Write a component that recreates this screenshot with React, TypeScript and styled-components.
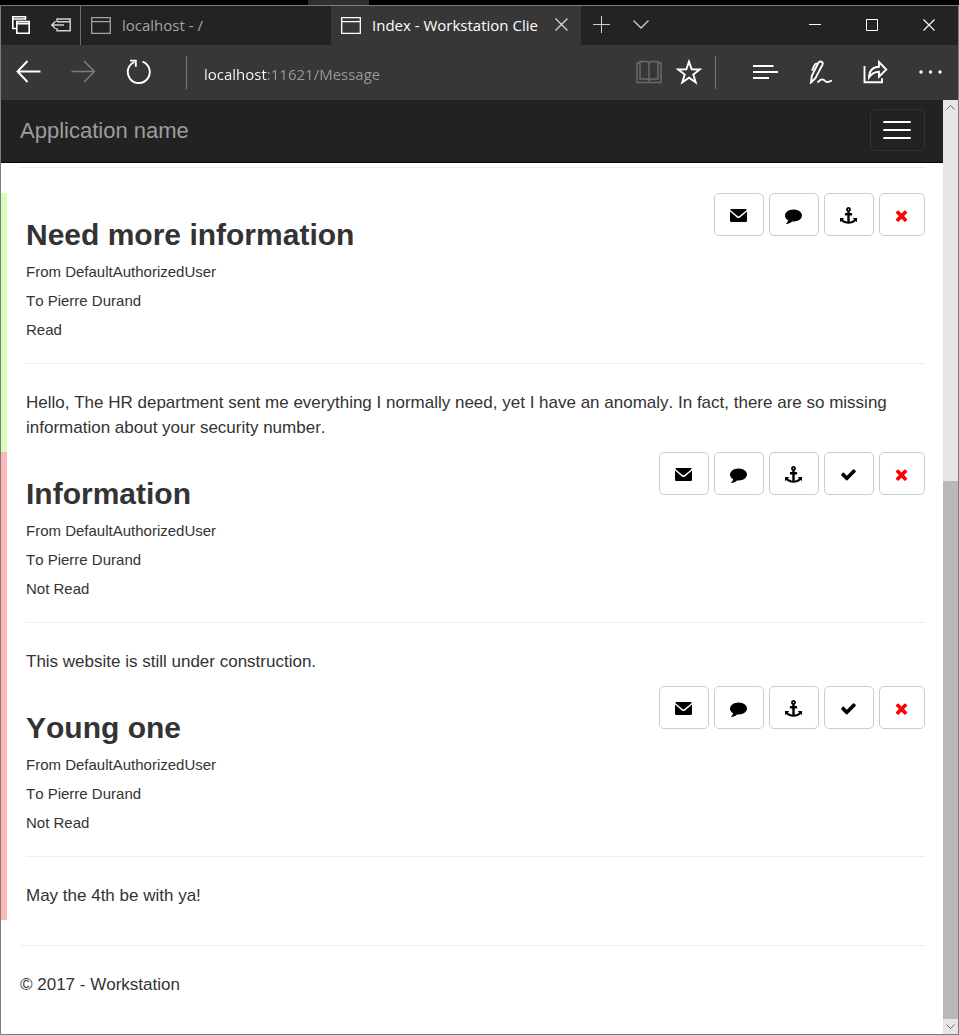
import React from "react";
import styled, { createGlobalStyle } from "styled-components";

const GlobalStyle = createGlobalStyle`
  *, *::before, *::after { box-sizing: border-box; }
  body { margin: 0; background: #000; }
  button, input { font: inherit; margin: 0; }
`;

const chromeFont = `"Segoe UI", "Open Sans", sans-serif`;
const pageFont = `"Liberation Sans", Arial, sans-serif`;

/* ---------- window frame ---------- */

const Desktop = styled.div`
  min-height: 100vh;
  display: flex;
  flex-direction: column;
`;

const DesktopStrip = styled.div`
  height: 5px;
  padding-left: 308px;
  background: #000;
`;

const StripPiece = styled.div`
  width: 61px;
  height: 5px;
  background: #2f2f2f;
`;

const BrowserWindow = styled.div`
  flex: 1;
  display: flex;
  flex-direction: column;
  border: 1px solid #7c7c7c;
  background: #fff;
`;

const TabStrip = styled.header`
  display: flex;
  height: 39px;
  padding-right: 1px;
  background: #232323;
  font: 15px/24px ${chromeFont};
`;

const IconButton = styled.button<{ $width: number; $color?: string }>`
  flex: none;
  width: ${(p) => p.$width}px;
  padding: 0 0 2px;
  display: flex;
  align-items: center;
  justify-content: center;
  border: 0;
  background: transparent;
  color: ${(p) => p.$color ?? "#fff"};

  svg { display: block; }
`;

const TabTools = styled.div`
  display: flex;
  width: 80px;
  border-right: 1px solid #6e6e6e;
`;

const Tab = styled.div<{ $active?: boolean }>`
  flex: 0 1 250px;
  min-width: 0;
  display: flex;
  align-items: center;
  padding: 0 0 1px 10px;
  background: ${(p) => (p.$active ? "#373737" : "transparent")};
  color: ${(p) => (p.$active ? "#fff" : "#a3a3a3")};

  svg { flex: none; display: block; }
`;

const TabTitle = styled.span`
  flex: 1;
  min-width: 0;
  margin-left: 11px;
  overflow: hidden;
  white-space: nowrap;
`;

const Spacer = styled.div`
  flex: 1;
`;

const Toolbar = styled.nav`
  display: flex;
  height: 55px;
  background: #373737;
  font: 15px/24px ${chromeFont};
`;

const Divider = styled.div<{ $before: number; $after: number }>`
  flex: none;
  align-self: center;
  width: 1px;
  height: 33px;
  margin: 0 ${(p) => p.$after}px 0 ${(p) => p.$before}px;
  background: #7a7a7a;
`;

/* The host name is bright, the port and path are dimmed. */
const AddressInput = styled.input`
  flex: 1;
  min-width: 0;
  align-self: center;
  height: 32px;
  padding: 2px 0 0;
  border: 0;
  outline: 0;
  color: transparent;
  caret-color: #fff;
  background: linear-gradient(to right, #fff 63px, #9b9b9b 63px);
  -webkit-background-clip: text;
  background-clip: text;
`;

const Viewport = styled.div`
  flex: 1;
  display: flex;
`;

/* ---------- web page ---------- */

const Page = styled.div`
  flex: 1;
  min-width: 0;
  color: #333;
  font: 17px/25px ${pageFont};
  font-kerning: none;
`;

const Navbar = styled.header`
  display: flex;
  align-items: center;
  justify-content: space-between;
  padding: 9px 18px 11px 19px;
  border-bottom: 1px solid #080808;
  background: #222;
`;

const Brand = styled.a`
  color: #9d9d9d;
  font-size: 22px;
  line-height: 25px;
  text-decoration: none;
`;

const NavToggle = styled.button`
  width: 55px;
  height: 42px;
  padding: 0 12px;
  display: flex;
  flex-direction: column;
  justify-content: center;
  gap: 6px;
  border: 1px solid #333;
  border-radius: 5px;
  background: transparent;
`;

const ToggleBar = styled.span`
  width: 28px;
  height: 2px;
  border-radius: 1px;
  background: #fff;
`;

const Rule = styled.hr<{ $top: number }>`
  height: 1px;
  margin: ${(p) => p.$top}px 18px 25px 19px;
  border: 0;
  background: #eee;
`;

const Message = styled.article<{ $read: boolean }>`
  padding: 0 18px 12px 19px;
  border-left: 6px solid ${(p) => (p.$read ? "#d3ffb8" : "#ffb8b8")};
`;

const MessageHead = styled.div`
  display: flex;
  justify-content: space-between;
  align-items: flex-start;
  padding-bottom: 23px;
  border-bottom: 1px solid #eee;
`;

const Title = styled.h2`
  margin: 25px 0 10px;
  font-size: 30px;
  line-height: 34px;
  font-weight: 700;
`;

const Meta = styled.p`
  margin: 0;
  font-size: 15px;
  line-height: 20px;

  & + & { margin-top: 9px; }
`;

const Body = styled.p`
  margin: 26px 0 0;
`;

const Actions = styled.div`
  display: flex;
  gap: 5px;
`;

const ActionButton = styled.button<{ $danger?: boolean }>`
  width: ${(p) => (p.$danger ? 46 : 50)}px;
  height: 43px;
  padding: 2px 1px 0 0;
  display: flex;
  align-items: center;
  justify-content: center;
  border: 1px solid #ccc;
  border-radius: 5px;
  background: #fff;
  color: ${(p) => (p.$danger ? "#f00" : "#000")};

  svg { display: block; fill: currentColor; }
`;

const Copyright = styled.p`
  margin: 26px 19px 12px;
`;

/* ---------- scrollbar ---------- */

const Scrollbar = styled.div`
  flex: none;
  width: 15px;
  display: flex;
  flex-direction: column;
  background: #e6e6e6;
`;

const ScrollTrack = styled.div`
  flex: 366;
`;

const ScrollThumb = styled.div`
  flex: 538;
  background: #b8b8b8;
`;

const ScrollArrow = styled.button`
  width: 15px;
  height: 15px;
  padding: 0;
  display: flex;
  align-items: center;
  justify-content: center;
  border: 0;
  background: #e6e6e6;
  color: #6b6b6b;
`;

/* ---------- icons ---------- */

type LineProps = { w: number; h: number; sw?: number; children: React.ReactNode };

const Line = ({ w, h, sw = 1, children }: LineProps) => (
  <svg width={w} height={h} viewBox={`0 0 ${w} ${h}`} fill="none" stroke="currentColor" strokeWidth={sw} aria-hidden="true">
    {children}
  </svg>
);

const TabsAsideIcon = () => (
  <Line w={18} h={18} sw={1.6}>
    <path d="M4.500 12.500H.8V.8h12.700v3M1 3h12.500" />
    <path d="M4.800 5.500h12.400V17.200H4.800zM4.800 7.600h12.400" />
  </Line>
);

const SetAsideIcon = () => (
  <Line w={20} h={16} sw={1.5}>
    <path d="M6 5V2h13.200v11.800H6V11M6 4.800h13.200M0.800 8H13M4.500 4.300L0.800 8l3.700 3.700" />
  </Line>
);

const PageIcon = () => (
  <Line w={20} h={17} sw={1.3}>
    <path d="M.7.7h18.6v15.6H.7zM.7 4.7h18.6" />
  </Line>
);

const CrossIcon = ({ size, sw }: { size: number; sw: number }) => (
  <Line w={size} h={size} sw={sw}>
    <path d={`M.5 .5L${size - 0.5} ${size - 0.5}M${size - 0.5} .5L.5 ${size - 0.5}`} />
  </Line>
);

const BackIcon = () => (
  <Line w={25} h={23} sw={1.9}>
    <path d="M1.500 11.500H24.500M11.500 1L1.500 11.500 11.500 22" />
  </Line>
);

const ForwardIcon = () => (
  <Line w={25} h={23} sw={1.5}>
    <path d="M.5 11.500h23M13 1L23.500 11.500 13 22" />
  </Line>
);

const RefreshIcon = () => (
  <Line w={26} h={25} sw={1.9}>
    <path d="M16.500 2.700A11 11 0 1 1 8.300 3" />
    <path d="M4 1.600h5.800v6.200" />
  </Line>
);

const BookIcon = () => (
  <Line w={26} h={24} sw={1.5}>
    <path d="M4 3H1v19.500h24V3h-3M4 19V1.500h6q2 0 3 1.500 1-1.500 3-1.500h6V19h-6q-2 0-3 1.500-1-1.500-3-1.500zM13 3v18" />
  </Line>
);

const StarIcon = () => (
  <Line w={26} h={26} sw={1.9}>
    <path d="M13 2.600l2.700 7.700 8.100.2-6.500 5 2.400 7.800L13 18.600l-6.700 4.700 2.400-7.800-6.500-5 8.100-.2z" />
  </Line>
);

const HubIcon = () => (
  <Line w={25} h={16} sw={1.8}>
    <path d="M0 2h20.500M0 8h25M0 14h16" />
  </Line>
);

const PenIcon = () => (
  <Line w={24} h={24} sw={1.9}>
    <path d="M2 22.500l.8-6.800L9.500 2.600q1-1.600 2.900-1 2 1 1.100 3L6.400 18.200zM9.200 4.200Q6.800 2.600 5.500 5.200L3 10.600" />
    <path d="M8.500 22.500q4-4.500 6.500-2.500c2 2.500 3.500 2.500 8 .5" />
  </Line>
);

const ShareIcon = () => (
  <Line w={25} h={24} sw={1.9}>
    <path d="M1.500 6v16.200h17.500v-4" />
    <path d="M6 17.500Q6.500 7 16 6.800V2l7.300 7.500-7.300 7.200v-4.900Q10 11.800 6 17.500z" />
  </Line>
);

const MoreIcon = () => (
  <svg width="23" height="4" viewBox="0 0 23 4" fill="currentColor" aria-hidden="true">
    <circle cx="2" cy="2" r="1.700" />
    <circle cx="11.500" cy="2" r="1.700" />
    <circle cx="21" cy="2" r="1.700" />
  </svg>
);

const Glyph = ({ d }: { d: string }) => (
  <svg width="17" height="17" viewBox="0 0 1792 1792" aria-hidden="true">
    <path d={d} />
  </svg>
);

const EnvelopeIcon = () => (
  <svg width="17" height="17" viewBox="0 0 17 17" aria-hidden="true">
    <path d="M.6 2h15.800v1.200L9.500 9.100q-1 .8-2 0L.6 3.200z" />
    <path d="M0 4.400l6.900 6q1.600 1.200 3.200 0l6.900-6v9q0 1.600-1.200 1.600H1.200Q0 15 0 13.400z" />
  </svg>
);

const glyphs = {
  comment:
    "M1792 896q0 174-120 321.500t-326 233-450 85.500q-70 0-145-8-198 175-460 242-49 14-114 22-17 2-30.500-9t-17.500-29v-1q-3-4-.5-12t2-10 4.500-9.500l6-9 7-8.500 8-9q7-8 31-34.500t34.500-38 31-39.500 32.500-51 27-59 26-76q-157-89-247.500-220t-90.500-281q0-130 71-248.500t191-204.500 286-136.500 348-50.500q244 0 450 85.500t326 233 120 321.500z",
  anchor:
    "M960 256q0-26-19-45t-45-19-45 19-19 45 19 45 45 19 45-19 19-45zm832 928v352q0 22-20 30-8 2-12 2-12 0-23-9l-93-93q-119 143-318.500 226.500t-429.500 83.500-429.500-83.500-318.500-226.500l-93 93q-9 9-23 9-4 0-12-2-20-8-20-30v-352q0-14 9-23t23-9h352q22 0 30 20 8 19-7 35l-100 100q67 91 189.500 153.500t271.500 82.500v-647h-192q-26 0-45-19t-19-45v-128q0-26 19-45t45-19h192v-163q-58-34-93-92.500t-35-128.500q0-106 75-181t181-75 181 75 75 181q0 70-35 128.500t-93 92.500v163h192q26 0 45 19t19 45v128q0 26-19 45t-45 19h-192v647q149-20 271.500-82.500t189.500-153.500l-100-100q-15-16-7-35 8-20 30-20h352q14 0 23 9t9 23z",
  check:
    "M1671 566q0 40-28 68l-724 724-136 136q-28 28-68 28t-68-28l-136-136-362-362q-28-28-28-68t28-68l136-136q28-28 68-28t68 28l294 295 656-657q28-28 68-28t68 28l136 136q28 28 28 68z",
  times:
    "M1490 1322q0 40-28 68l-136 136q-28 28-68 28t-68-28l-294-294-294 294q-28 28-68 28t-68-28l-136-136q-28-28-28-68t28-68l294-294-294-294q-28-28-28-68t28-68l136-136q28-28 68-28t68 28l294 294 294-294q28-28 68-28t68 28l136 136q28 28 28 68t-28 68l-294 294 294 294q28 28 28 68z",
};

/* ---------- data ---------- */

type MessageData = { title: string; from: string; to: string; read: boolean; text: string };

const messages: MessageData[] = [
  {
    title: "Need more information",
    from: "DefaultAuthorizedUser",
    to: "Pierre Durand",
    read: true,
    text: "Hello, The HR department sent me everything I normally need, yet I have an anomaly. In fact, there are so missing information about your security number.",
  },
  {
    title: "Information",
    from: "DefaultAuthorizedUser",
    to: "Pierre Durand",
    read: false,
    text: "This website is still under construction.",
  },
  {
    title: "Young one",
    from: "DefaultAuthorizedUser",
    to: "Pierre Durand",
    read: false,
    text: "May the 4th be with ya!",
  },
];

const MessageItem = ({ title, from, to, read, text }: MessageData) => (
  <Message $read={read}>
    <MessageHead>
      <div>
        <Title>{title}</Title>
        <Meta>From {from}</Meta>
        <Meta>To {to}</Meta>
        <Meta>{read ? "Read" : "Not Read"}</Meta>
      </div>
      <Actions>
        <ActionButton aria-label="Mail"><EnvelopeIcon /></ActionButton>
        <ActionButton aria-label="Reply"><Glyph d={glyphs.comment} /></ActionButton>
        <ActionButton aria-label="Pin"><Glyph d={glyphs.anchor} /></ActionButton>
        {!read && <ActionButton aria-label="Mark as read"><Glyph d={glyphs.check} /></ActionButton>}
        <ActionButton $danger aria-label="Delete"><Glyph d={glyphs.times} /></ActionButton>
      </Actions>
    </MessageHead>
    <Body>{text}</Body>
  </Message>
);

export default function App() {
  return (
    <Desktop>
      <GlobalStyle />
      <DesktopStrip><StripPiece /></DesktopStrip>
      <BrowserWindow>
        <TabStrip>
          <TabTools>
            <IconButton $width={40} aria-label="Tabs you've set aside"><TabsAsideIcon /></IconButton>
            <IconButton $width={40} $color="#d0d0d0" aria-label="Set these tabs aside"><SetAsideIcon /></IconButton>
          </TabTools>
          <Tab>
            <PageIcon />
            <TabTitle>localhost - /</TabTitle>
          </Tab>
          <Tab $active>
            <PageIcon />
            <TabTitle>Index - Workstation Clie</TabTitle>
            <IconButton $width={40} $color="#d8d8d8" aria-label="Close tab"><CrossIcon size={13} sw={1.3} /></IconButton>
          </Tab>
          <IconButton $width={40} $color="#d0d0d0" aria-label="New tab">
            <Line w={17} h={17}><path d="M8.500 0v17M0 8.500h17" /></Line>
          </IconButton>
          <IconButton $width={40} $color="#d0d0d0" aria-label="Show tab previews">
            <Line w={16} h={9} sw={1.3}><path d="M.5 .5l7.500 7.500 7.500-7.500" /></Line>
          </IconButton>
          <Spacer />
          <IconButton $width={57} aria-label="Minimize">
            <Line w={12} h={1}><path d="M0 .5h12" /></Line>
          </IconButton>
          <IconButton $width={57} aria-label="Maximize">
            <Line w={12} h={12}><path d="M.5 .5h11v11H.5z" /></Line>
          </IconButton>
          <IconButton $width={57} aria-label="Close window"><CrossIcon size={12} sw={1.1} /></IconButton>
        </TabStrip>

        <Toolbar>
          <IconButton $width={55} aria-label="Back"><BackIcon /></IconButton>
          <IconButton $width={55} $color="#7c7c7c" aria-label="Forward"><ForwardIcon /></IconButton>
          <IconButton $width={55} aria-label="Refresh"><RefreshIcon /></IconButton>
          <Divider $before={20} $after={17} />
          <AddressInput aria-label="Address" defaultValue="localhost:11621/Message" spellCheck={false} />
          <IconButton $width={40} $color="#6a6a6a" aria-label="Reading view"><BookIcon /></IconButton>
          <IconButton $width={40} aria-label="Add to favorites"><StarIcon /></IconButton>
          <Divider $before={6} $after={22} />
          <IconButton $width={55} aria-label="Hub"><HubIcon /></IconButton>
          <IconButton $width={55} aria-label="Make a Web Note"><PenIcon /></IconButton>
          <IconButton $width={55} aria-label="Share"><ShareIcon /></IconButton>
          <IconButton $width={55} aria-label="More"><MoreIcon /></IconButton>
        </Toolbar>

        <Viewport>
          <Page>
            <Navbar>
              <Brand href="#">Application name</Brand>
              <NavToggle aria-label="Toggle navigation">
                <ToggleBar />
                <ToggleBar />
                <ToggleBar />
              </NavToggle>
            </Navbar>
            <main>
              <Rule $top={4} />
              {messages.map((m) => (
                <MessageItem key={m.title} {...m} />
              ))}
            </main>
            <footer>
              <Rule $top={25} />
              <Copyright>© 2017 - Workstation</Copyright>
            </footer>
          </Page>
          <Scrollbar>
            <ScrollArrow aria-label="Scroll up">
              <Line w={9} h={5}><path d="M.5 4.500l4-4 4 4" /></Line>
            </ScrollArrow>
            <ScrollTrack />
            <ScrollThumb />
            <ScrollArrow aria-label="Scroll down">
              <Line w={9} h={5}><path d="M.5 .5l4 4 4-4" /></Line>
            </ScrollArrow>
          </Scrollbar>
        </Viewport>
      </BrowserWindow>
    </Desktop>
  );
}
